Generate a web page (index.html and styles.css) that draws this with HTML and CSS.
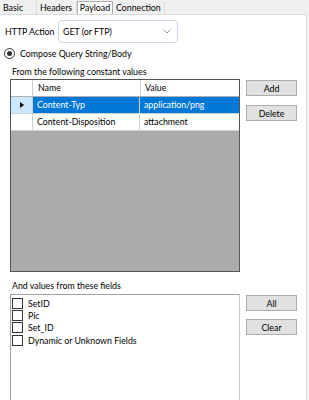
FILE: index.html
```html
<html>
  <head>
    <title>Payload</title>
    <link rel="stylesheet" href="styles.css">
  </head>
  <body>
    <div class="tabs">
      <div class="tab tab-basic">Basic</div>
      <div class="tab tab-headers">Headers</div>
      <div class="tab tab-active">Payload</div>
      <div class="tab tab-conn">Connection</div>
    </div>
    <div class="panel">
      <div class="action-row">
        <span class="label">HTTP Action</span>
        <div class="combo">
          <span>GET (or FTP)</span>
          <svg class="chev" width="8" height="5" viewBox="0 0 8 5"><path d="M0.5 0.5 L4 4 L7.5 0.5" fill="none" stroke="#8a94a6" stroke-width="1"/></svg>
        </div>
      </div>
      <div class="radio-row">
        <span class="radio"><span class="dot"></span></span>
        <span>Compose Query String/Body</span>
      </div>
      <div class="caption">From the following constant values</div>
      <div class="section">
        <div class="grid">
          <div class="grid-row grid-head">
            <div class="rh"></div>
            <div class="c-name">Name</div>
            <div class="c-val">Value</div>
          </div>
          <div class="grid-row selected">
            <div class="rh"><span class="arrow"></span></div>
            <div class="c-name">Content-Typ</div>
            <div class="c-val">application/png</div>
          </div>
          <div class="grid-row">
            <div class="rh"></div>
            <div class="c-name">Content-Disposition</div>
            <div class="c-val">attachment</div>
          </div>
          <div class="grid-empty"></div>
        </div>
        <div class="buttons">
          <button class="btn">Add</button>
          <button class="btn">Delete</button>
        </div>
      </div>
      <div class="caption caption-fields">And values from these fields</div>
      <div class="section">
        <div class="list">
          <div class="item"><span class="check"></span>SetID</div>
          <div class="item"><span class="check"></span>Pic</div>
          <div class="item"><span class="check"></span>Set_ID</div>
          <div class="item"><span class="check"></span>Dynamic or Unknown Fields</div>
        </div>
        <div class="buttons buttons-fields">
          <button class="btn">All</button>
          <button class="btn">Clear</button>
        </div>
      </div>
    </div>
  </body>
</html>
```

FILE: styles.css
```css
body {
  margin: 0;
  background: #f0f0f0;
  font-family: Lato, "Noto Sans", sans-serif;
  font-size: 8.8px;
  color: #000;
  overflow: hidden;
}

/* tab strip */
.tabs {
  display: flex;
  height: 14px;
  align-items: flex-end;
}
.tab {
  height: 12px;
  line-height: 12px;
  box-sizing: border-box;
  border-right: 1px solid #dcdcdc;
}
.tab-basic {
  width: 37px;
  padding-left: 3px;
}
.tab-headers {
  width: 40px;
  padding-left: 3px;
}
.tab-active {
  height: 13px;
  width: 36px;
  background: #fff;
  border: 1px solid #adadad;
  border-bottom: none;
  text-align: center;
}
.tab-conn {
  width: 52px;
  padding-left: 3px;
}

/* main panel */
.panel {
  background: #fff;
  width: 306px;
  height: 386px;
  border-top: 1px solid #dadada;
  border-right: 1px solid #dadada;
}

.action-row {
  display: flex;
  align-items: center;
  padding: 5px 0 0 5px;
}
.label {
  width: 53px;
  flex-shrink: 0;
  white-space: nowrap;
}
.combo {
  width: 108px;
  height: 21px;
  border: 1px solid #ccd6e6;
  border-radius: 4px;
  display: flex;
  align-items: center;
  justify-content: space-between;
  padding: 0 6px 0 4px;
}

.radio-row {
  display: flex;
  align-items: center;
  padding: 4px 0 0 4px;
  height: 12px;
}
.radio {
  width: 9px;
  height: 9px;
  border: 1px solid #333;
  border-radius: 50%;
  display: flex;
  align-items: center;
  justify-content: center;
  margin-right: 5px;
}
.dot {
  width: 5px;
  height: 5px;
  border-radius: 50%;
  background: #333;
}

.caption {
  padding: 7px 0 0 12px;
  height: 11px;
}
.caption-fields {
  padding-top: 8px;
  height: 12px;
}

.section {
  display: flex;
  padding: 2px 0 0 10px;
}

/* grid */
.grid {
  width: 228px;
  height: 191px;
  border: 1px solid #555;
  background: #ababab;
  display: flex;
  flex-direction: column;
}
.grid-row {
  display: flex;
  height: 16px;
  line-height: 15px;
  background: #fff;
  border-bottom: 1px solid #d0d0d0;
}
.grid-row .rh {
  width: 21px;
  border-right: 1px solid #d0d0d0;
  display: flex;
  align-items: center;
  justify-content: center;
}
.c-name {
  width: 102px;
  padding-left: 4px;
  border-right: 1px solid #d0d0d0;
}
.c-val {
  flex: 1;
  padding-left: 4px;
}
.grid-head {
  border-bottom: 1px solid #b0b0b0;
}
.grid-head .c-name {
  padding-left: 5px;
}
.selected .c-name,
.selected .c-val {
  background: #0078d7;
  color: #fff;
}
.selected .rh {
  background: #cce8ff;
}
.arrow {
  width: 0;
  height: 0;
  border-top: 3px solid transparent;
  border-bottom: 3px solid transparent;
  border-left: 4px solid #000;
}
.grid-empty {
  flex: 1;
}

/* buttons */
.buttons {
  display: flex;
  flex-direction: column;
  gap: 9px;
  margin-left: 6px;
  padding-top: 1px;
}
.btn {
  width: 51px;
  height: 16px;
  padding: 0;
  background: #e1e1e1;
  border: 1px solid #adadad;
  font-family: Lato, "Noto Sans", sans-serif;
  font-size: 8.8px;
  color: #000;
}
.buttons-fields {
  gap: 8px;
  padding-top: 1px;
}

/* field list */
.list {
  width: 228px;
  height: 110px;
  border: 1px solid #a0a0a0;
  border-right-color: #c8c8c8;
  padding-top: 2px;
}
.item {
  display: flex;
  align-items: center;
  height: 12.4px;
  padding-left: 1px;
}
.check {
  width: 9px;
  height: 9px;
  border: 1px solid #333;
  margin-right: 5px;
}
```
